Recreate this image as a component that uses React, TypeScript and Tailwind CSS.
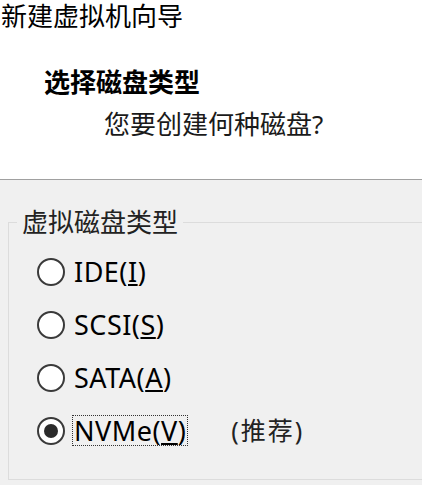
import React from 'react';

const cjk = "font-['Noto_Sans','Noto_Sans_CJK_SC',sans-serif]";

type Opt = { id: string; label: string; key: string; rest: string; checked?: boolean; note?: string };

const options: Opt[] = [
    { id: 'ide', label: 'IDE(', key: 'I', rest: ')' },
    { id: 'scsi', label: 'SCSI(', key: 'S', rest: ')' },
    { id: 'sata', label: 'SATA(', key: 'A', rest: ')' },
    { id: 'nvme', label: 'NVMe(', key: 'V', rest: ')', checked: true, note: '(推荐)' },
];

function Radio({ checked }: { checked?: boolean }) {
    return (
        <span className="w-[28px] h-[28px] rounded-full border-2 border-[#3a3a3a] bg-white flex items-center justify-center shrink-0">
            {checked && <span className="w-[14px] h-[14px] rounded-full bg-[#2b2b2b]" />}
        </span>
    );
}

export default function App() {
    return (
        <div className={`w-[422px] h-[485px] overflow-hidden bg-[#f0f0f0] text-black ${cjk}`}>
            {/* Header */}
            <div className="h-[180px] bg-white border-b border-[#a0a0a0]">
                <div className="pl-px text-[26px] leading-[32px]">新建虚拟机向导</div>
                <div className="mt-[35px] ml-[44px] text-[26px] leading-[30px] font-bold">选择磁盘类型</div>
                <div className="mt-[12px] ml-[104px] text-[26px] leading-[30px] text-[#1a1a1a]">您要创建何种磁盘?</div>
            </div>

            {/* Disk type group */}
            <fieldset className="mt-[27px] ml-[8px] w-[460px] border border-[#dcdcdc] pb-[22px]">
                <legend className="ml-[8px] px-[5px] text-[26px] leading-[30px] text-[#222]">虚拟磁盘类型</legend>
                <div className="pt-[8px] pl-[28px]">
                    {options.map((o) => (
                        <div key={o.id} className="h-[53px] flex items-center">
                            <Radio checked={o.checked} />
                            <span
                                className={`ml-[8px] text-[27px] leading-[29px] tracking-[0.5px] px-px ${
                                    o.checked ? 'outline-1 outline-dotted outline-[#333]' : ''
                                }`}
                            >
                                {o.label}
                                <u className="underline-offset-[2px]">{o.key}</u>
                                {o.rest}
                            </span>
                            {o.note && (
                                <span className="ml-[44px] text-[25px] leading-[29px] tracking-[2px] text-[#222]">
                                    {o.note}
                                </span>
                            )}
                        </div>
                    ))}
                </div>
            </fieldset>
        </div>
    );
}
